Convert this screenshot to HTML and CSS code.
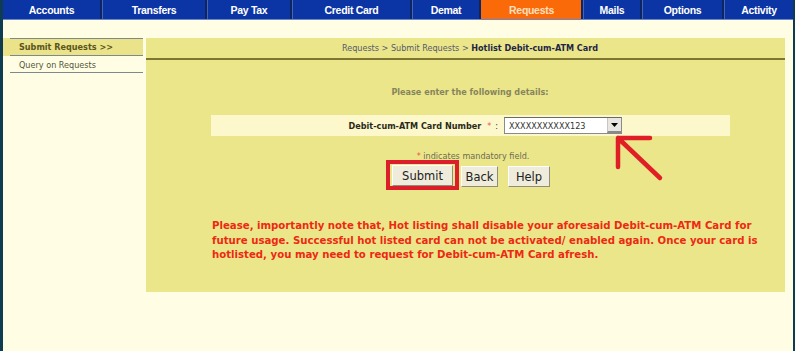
FILE: index.html
```html
<!DOCTYPE html>
<html>
<head>
<meta charset="utf-8">
<link rel="stylesheet" href="styles.css">
</head>
<body>
<div class="page">
  <nav class="nav">
    <a class="tab t-accounts">Accounts</a>
    <a class="tab t-transfers">Transfers</a>
    <a class="tab t-paytax">Pay Tax</a>
    <a class="tab t-credit">Credit Card</a>
    <a class="tab t-demat">Demat</a>
    <a class="tab t-requests active">Requests</a>
    <a class="tab t-mails">Mails</a>
    <a class="tab t-options">Options</a>
    <a class="tab t-activity">Activity</a>
  </nav>
  <div class="content">
    <aside class="side">
      <div class="side-item active">Submit Requests &gt;&gt;</div>
      <div class="side-item">Query on Requests</div>
    </aside>
    <main class="main">
      <div class="crumbs">Requests &gt; Submit Requests &gt; <b>Hotlist Debit-cum-ATM Card</b></div>
      <div class="intro">Please enter the following details:</div>
      <div class="form-row">
        <span class="label">Debit-cum-ATM Card Number</span>
        <span class="req">*</span>
        <span class="colon">:</span>
        <span class="select"><span class="select-text">XXXXXXXXXXX123</span><span class="select-btn"><svg width="7" height="4" viewBox="0 0 7 4"><path d="M0 0H7L3.5 4Z" fill="#000"/></svg></span></span>
      </div>
      <div class="note"><span class="req">*</span> indicates mandatory field.</div>
      <div class="buttons">
        <span class="highlight"><button class="btn btn-submit">Submit</button></span>
        <button class="btn btn-back">Back</button>
        <button class="btn btn-help">Help</button>
      </div>
      <p class="warning">Please, importantly note that, Hot listing shall disable your aforesaid Debit-cum-ATM Card for future usage. Successful hot listed card can not be activated/ enabled again. Once your card is hotlisted, you may need to request for Debit-cum-ATM Card afresh.</p>
      <svg class="arrow" width="60" height="60" viewBox="0 0 60 60"><path d="M4 4L46 44M4 4H36M4 4V33" stroke="#e01e26" stroke-width="4.5" fill="none" stroke-linecap="round"/></svg>
    </main>
  </div>
</div>
</body>
</html>
```

FILE: styles.css
```css
html, body {
  margin: 0;
  padding: 0;
}
body {
  background: #0e3c50;
  padding: 0 2px 0 3px;
  height: 351px;
  box-sizing: border-box;
  overflow: hidden;
}
.page {
  background: #fffee4;
  height: 351px;
}
.nav {
  display: flex;
  background: #0d2560;
  border-bottom: 1px solid #6f86c4;
  box-sizing: border-box;
  height: 20px;
}
.tab {
  background: #0b34a4;
  color: #fff;
  font: bold 10.5px "Liberation Sans", Arial, sans-serif;
  letter-spacing: -0.3px;
  display: flex;
  align-items: center;
  justify-content: center;
  margin-right: 2px;
  border-left: 1px solid #4963b4;
  box-sizing: border-box;
}
.tab.active {
  background: #fb6a08;
  color: #fde0c0;
  border-left-color: #fb6a08;
}
.t-accounts { width: 97px; border-left: none; }
.t-transfers { width: 103px; }
.t-paytax { width: 83px; }
.t-credit { width: 118px; }
.t-demat { width: 67px; }
.t-requests { width: 100px; }
.t-mails { width: 57px; }
.t-options { width: 80px; }
.t-activity { flex: 1; margin-right: 0; }

.content {
  display: flex;
  padding-top: 18px;
  gap: 3px;
}
.side {
  width: 140px;
}
.side-item {
  height: 17px;
  padding-left: 16px;
  font: 9px "DejaVu Sans Condensed", "DejaVu Sans", sans-serif;
  color: #55553a;
  display: flex;
  align-items: center;
  box-sizing: border-box;
  background: linear-gradient(#7c8a8c, #7c8a8c) 7px 100% / calc(100% - 7px) 1px no-repeat;
}
.side-item.active {
  height: 18px;
  font-weight: bold;
  font-size: 9px;
  color: #5a5520;
  background:
    linear-gradient(#7c8a8c, #7c8a8c) 7px 0 / calc(100% - 7px) 1px no-repeat,
    linear-gradient(#7c8a8c, #7c8a8c) 7px 100% / calc(100% - 7px) 1px no-repeat,
    #ebe38a;
}
.main {
  position: relative;
  width: 639px;
  height: 254px;
  background: #ece68b;
  font-family: "DejaVu Sans Condensed", "DejaVu Sans", sans-serif;
}
.crumbs {
  height: 22px;
  box-sizing: border-box;
  border-bottom: 2px solid #7e7630;
  text-align: center;
  padding-left: 9px;
  font-size: 9px;
  line-height: 20px;
  color: #555a6a;
}
.crumbs b {
  color: #1e2546;
}
.intro {
  margin-top: 26px;
  text-align: center;
  padding-left: 9px;
  font-size: 9px;
  font-weight: bold;
  color: #86845c;
  line-height: 12px;
}
.form-row {
  margin: 17px 0 0 65px;
  width: 519px;
  height: 21px;
  background: #fcf8cc;
  display: flex;
  align-items: center;
  justify-content: flex-end;
  padding-right: 108px;
  box-sizing: border-box;
  font-size: 9px;
}
.label {
  font-weight: bold;
  color: #2a2a1a;
}
.req {
  color: #f0544a;
  margin: 0 4px 0 6px;
}
.colon {
  color: #2a2a1a;
  margin-right: 6px;
}
.select {
  width: 118px;
  height: 17px;
  box-sizing: border-box;
  background: #fff;
  border: 1px solid #8a8a8a;
  border-top-color: #6a6a6a;
  display: flex;
  align-items: center;
  justify-content: space-between;
  font-size: 9px;
  color: #333;
}
.select-text {
  padding-left: 4px;
}
.select-btn {
  width: 14px;
  height: 15px;
  background: #e8e6e0;
  border-left: 1px solid #c8c6c0;
  display: flex;
  align-items: center;
  justify-content: center;
  box-sizing: border-box;
  border-bottom: 2px solid #8a8a8a;
}
.note {
  margin-top: 15px;
  text-align: center;
  padding-left: 15px;
  font-size: 9px;
  color: #6c6c50;
  line-height: 11px;
}
.note .req {
  margin: 0;
}
.buttons {
  display: flex;
  align-items: flex-end;
  margin: -2px 0 0 240px;
  height: 30px;
}
.highlight {
  display: inline-flex;
  border: 4px solid #dc1e2a;
  padding: 1px 2px 0;
}
.btn {
  font: 11.5px "DejaVu Sans", sans-serif;
  color: #222;
  background: #efecdc;
  border: 1px solid #fff;
  border-right-color: #8f8d7c;
  border-bottom-color: #8f8d7c;
  height: 21px;
  padding: 0;
  margin: 0;
}
.btn-submit { width: 61px; }
.btn-back { width: 37px; margin: 0 0 3px 2px; }
.btn-help { width: 42px; margin: 0 0 3px 10px; }
.warning {
  margin: 29px 0 0 66px;
  width: 548px;
  font-size: 11.3px;
  font-weight: bold;
  color: #ec2a12;
  line-height: 14.5px;
}
.arrow {
  position: absolute;
  left: 468px;
  top: 96px;
}
```
